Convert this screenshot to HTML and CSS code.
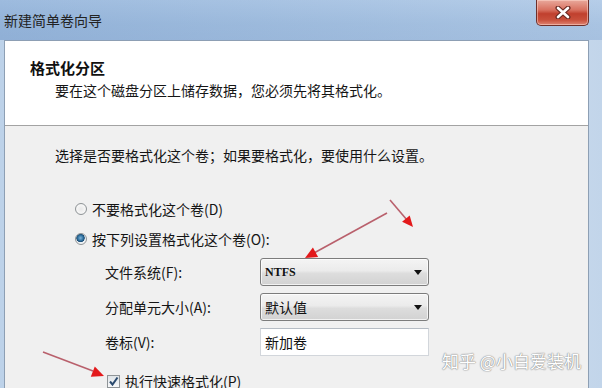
FILE: index.html
```html
<!DOCTYPE html>
<html lang="zh-CN">
<head>
<meta charset="utf-8">
<title>新建简单卷向导</title>
<link rel="stylesheet" href="styles.css">
</head>
<body>
<div class="window">
  <div class="titlebar">
    <span class="title">新建简单卷向导</span>
    <div class="close" aria-label="关闭">
      <svg width="16" height="13" viewBox="0 0 16 13">
        <path d="M3 2 L13 11 M13 2 L3 11" stroke="#6b2a22" stroke-width="5" stroke-linecap="round"/>
        <path d="M3 2 L13 11 M13 2 L3 11" stroke="#ffffff" stroke-width="2.6" stroke-linecap="round"/>
      </svg>
    </div>
  </div>
  <div class="client">
    <div class="header">
      <div class="header-title">格式化分区</div>
      <div class="header-sub">要在这个磁盘分区上储存数据，您必须先将其格式化。</div>
    </div>
    <div class="content">
      <p class="intro">选择是否要格式化这个卷；如果要格式化，要使用什么设置。</p>
      <div class="radio-row"><span class="radio"></span>不要格式化这个卷(D)</div>
      <div class="radio-row second"><span class="radio checked"></span>按下列设置格式化这个卷(O):</div>
      <div class="form">
        <span class="label">文件系统(F):</span>
        <div class="combo"><span class="combo-text latin">NTFS</span><span class="caret"></span></div>
        <span class="label">分配单元大小(A):</span>
        <div class="combo"><span class="combo-text">默认值</span><span class="caret"></span></div>
        <span class="label">卷标(V):</span>
        <div class="textbox">新加卷</div>
      </div>
      <div class="check-row">
        <span class="checkbox">
          <svg width="11" height="11" viewBox="0 0 11 11"><path d="M2 5.5 L4.5 8.5 L9.5 1.5" fill="none" stroke="#2b4a6e" stroke-width="2"/></svg>
        </span>执行快速格式化(P)
      </div>
    </div>
  </div>
  <svg class="annotations" width="602" height="388" viewBox="0 0 602 388">
    <g stroke="#b9606c" stroke-width="1.6" fill="none">
      <line x1="390" y1="200" x2="407" y2="220"/>
      <line x1="387" y1="213" x2="314" y2="253"/>
      <line x1="43" y1="352" x2="93" y2="371"/>
    </g>
    <g fill="#e3191b">
      <polygon points="413,227 409.7,215.4 402.1,221.8"/>
      <polygon points="305,258 312.9,247.4 318.1,257"/>
      <polygon points="104,376 90.8,376.7 94.8,366.5"/>
    </g>
  </svg>
  <div class="watermark">知乎 @小白爱装机</div>
</div>
</body>
</html>
```

FILE: styles.css
```css
* { box-sizing: border-box; }

html, body {
  margin: 0;
  padding: 0;
}

body {
  width: 602px;
  height: 388px;
  overflow: hidden;
  font-family: "Noto Sans CJK SC", "Noto Sans", sans-serif;
  color: #151515;
}

.window {
  position: relative;
  width: 602px;
  height: 388px;
  overflow: hidden;
  display: flex;
  flex-direction: column;
  background: linear-gradient(90deg, #bdd2e9 0%, #c6d9ed 40%, #dbe7f4 62%, #cfdfef 80%, #c2d5ea 100%);
}

.titlebar {
  height: 40px;
  flex: none;
  display: flex;
  align-items: center;
  padding-left: 4px;
  background: linear-gradient(180deg, #d4e3f3 0%, #c5d8ec 60%, #c2d5ea 100%),
              linear-gradient(90deg, #bdd2e9, #dbe7f4);
  background-blend-mode: multiply;
}

.title {
  font-size: 14px;
  line-height: 20px;
  color: #222;
  letter-spacing: 0;
}

.close {
  margin-left: auto;
  margin-right: 13px;
  align-self: flex-start;
  width: 53px;
  height: 26px;
  border: 1px solid #6e2f2a;
  border-top: none;
  border-radius: 0 0 5px 5px;
  background: linear-gradient(180deg, #e9a99c 0%, #d8705f 40%, #c0402e 55%, #c9503c 80%, #de8472 100%);
  box-shadow: inset 0 0 0 1px rgba(255, 220, 210, 0.5);
  display: flex;
  align-items: center;
  justify-content: center;
}

.client {
  flex: 1;
  margin: 0 13px 0 4px;
  border: 1px solid #8d9fb4;
  border-bottom: none;
  display: flex;
  flex-direction: column;
  background: #f0f0f0;
}

.header {
  height: 85px;
  flex: none;
  background: #ffffff;
  border-bottom: 1px solid #a3a3a3;
  padding: 17px 0 0 25px;
}

.header-title {
  font-size: 15px;
  font-weight: 700;
  line-height: 20px;
  color: #111;
}

.header-sub {
  margin: 2px 0 0 25px;
  font-size: 14px;
  line-height: 20px;
  color: #151515;
}

.content {
  flex: 1;
  background: #f0f0f0;
  padding: 19px 0 0 50px;
  font-size: 14px;
  line-height: 20px;
}

.intro {
  margin: 0;
}

.radio-row {
  display: flex;
  align-items: center;
  height: 20px;
  margin-top: 34px;
}

.radio-row.second {
  margin-top: 10px;
}

.radio {
  width: 12px;
  height: 12px;
  margin-left: 20px;
  margin-right: 5px;
  border-radius: 50%;
  border: 1px solid #8f9497;
  background: radial-gradient(circle at 50% 50%, #e8e8e8 0%, #f6f6f6 60%, #dcdcdc 100%);
  flex: none;
}

.radio.checked {
  background: radial-gradient(circle at 45% 40%, #7fb5da 0%, #2c6d9c 35%, #1b4b73 48%, #e8eef2 55%, #f4f4f4 75%, #d8d8d8 100%);
}

.form {
  margin-top: 9px;
  padding-left: 50px;
  display: grid;
  grid-template-columns: 155px 169px;
  grid-auto-rows: 28px;
  row-gap: 7px;
  align-items: center;
}

.label {
  line-height: 20px;
}

.combo {
  height: 28px;
  display: flex;
  align-items: center;
  padding: 0 6px 0 4px;
  border: 1px solid #7c7c7c;
  border-radius: 3px;
  background: linear-gradient(180deg, #f4f4f4 0%, #ebebeb 45%, #dddddd 55%, #d2d2d2 100%);
  box-shadow: inset 0 0 0 1px rgba(255, 255, 255, 0.7);
}

.combo-text {
  font-size: 14px;
  color: #111;
}

.combo-text.latin {
  font-family: "Liberation Serif", "DejaVu Serif", serif;
  font-weight: 700;
  font-size: 12px;
}

.caret {
  margin-left: auto;
  width: 0;
  height: 0;
  border-left: 4px solid transparent;
  border-right: 4px solid transparent;
  border-top: 5px solid #111;
}

.textbox {
  height: 28px;
  display: flex;
  align-items: center;
  padding-left: 4px;
  background: #ffffff;
  border: 1px solid #d2d6db;
  border-top-color: #b5bcc4;
  color: #111;
}

.check-row {
  display: flex;
  align-items: center;
  height: 20px;
  margin-top: 15px;
  padding-left: 52px;
}

.checkbox {
  width: 13px;
  height: 13px;
  margin-right: 5px;
  border: 1px solid #8f9497;
  background: linear-gradient(180deg, #dfe4e8, #f7f8f9);
  display: flex;
  align-items: center;
  justify-content: center;
  flex: none;
}

.annotations {
  position: absolute;
  left: 0;
  top: 0;
  pointer-events: none;
}

.watermark {
  position: absolute;
  left: 442px;
  top: 350px;
  font-size: 17px;
  line-height: 22px;
  color: #ffffff;
  text-shadow: 0 0 1px #8c8c8c, 0 0 1px #8c8c8c, 0 0 2px #b0b0b0;
  white-space: nowrap;
}
```
